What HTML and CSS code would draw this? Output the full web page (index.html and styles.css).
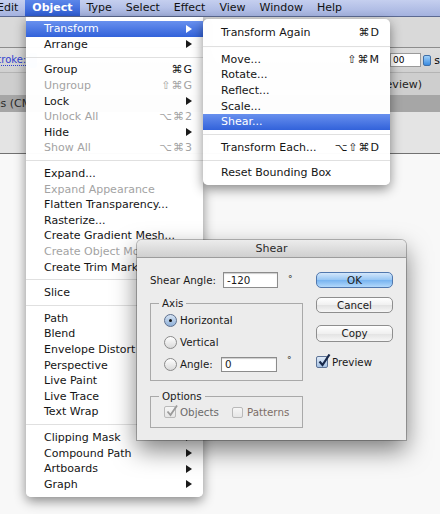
FILE: index.html
```html
<!DOCTYPE html>
<html lang="en">
<head>
    <meta charset="UTF-8">
    <title>Illustrator - Object menu</title>
    <link rel="stylesheet" href="styles.css">
</head>
<body>
<div class="screen">

    <!-- Menu bar -->
    <div class="menubar">
        <span class="mb-item first">Edit</span>
        <span class="mb-item active">Object</span>
        <span class="mb-item">Type</span>
        <span class="mb-item">Select</span>
        <span class="mb-item">Effect</span>
        <span class="mb-item">View</span>
        <span class="mb-item">Window</span>
        <span class="mb-item">Help</span>
    </div>

    <!-- Application chrome behind the menus -->
    <div class="toolbar"></div>
    <div class="controlbar">
        <span class="stroke-label">Stroke:</span>
        <span class="swatch"></span>
        <div class="control-right">
            <span class="mini-field">00</span>
            <span class="spin"></span>
            <span class="mini-text">s</span>
        </div>
    </div>
    <div class="tabbar">
        <div class="tab-clip"><span class="tab-title">(CMYK/Preview)</span></div>
    </div>
    <div class="tabstrip">
        <div class="doc-clip"><span class="doc-name">Shapes (CMYK/Preview)</span></div>
    </div>
    <div class="rulerbar"></div>
    <div class="canvas"></div>

    <!-- Object menu -->
    <div class="menu object-menu">
        <div class="item hot"><span>Transform</span><span class="arrow"></span></div>
        <div class="item"><span>Arrange</span><span class="arrow"></span></div>
        <div class="sep"></div>
        <div class="item"><span>Group</span><span class="key">⌘G</span></div>
        <div class="item disabled"><span>Ungroup</span><span class="key">⇧⌘G</span></div>
        <div class="item"><span>Lock</span><span class="arrow"></span></div>
        <div class="item disabled"><span>Unlock All</span><span class="key">⌥⌘2</span></div>
        <div class="item"><span>Hide</span><span class="arrow"></span></div>
        <div class="item disabled"><span>Show All</span><span class="key">⌥⌘3</span></div>
        <div class="sep"></div>
        <div class="item"><span>Expand...</span></div>
        <div class="item disabled"><span>Expand Appearance</span></div>
        <div class="item"><span>Flatten Transparency...</span></div>
        <div class="item"><span>Rasterize...</span></div>
        <div class="item"><span>Create Gradient Mesh...</span></div>
        <div class="item disabled"><span>Create Object Mosaic...</span></div>
        <div class="item"><span>Create Trim Marks</span></div>
        <div class="sep"></div>
        <div class="item"><span>Slice</span><span class="arrow"></span></div>
        <div class="sep"></div>
        <div class="item"><span>Path</span><span class="arrow"></span></div>
        <div class="item"><span>Blend</span><span class="arrow"></span></div>
        <div class="item"><span>Envelope Distort</span><span class="arrow"></span></div>
        <div class="item"><span>Perspective</span><span class="arrow"></span></div>
        <div class="item"><span>Live Paint</span><span class="arrow"></span></div>
        <div class="item"><span>Live Trace</span><span class="arrow"></span></div>
        <div class="item"><span>Text Wrap</span><span class="arrow"></span></div>
        <div class="sep"></div>
        <div class="item"><span>Clipping Mask</span><span class="arrow"></span></div>
        <div class="item"><span>Compound Path</span><span class="arrow"></span></div>
        <div class="item"><span>Artboards</span><span class="arrow"></span></div>
        <div class="item"><span>Graph</span><span class="arrow"></span></div>
    </div>

    <!-- Transform submenu -->
    <div class="menu submenu">
        <div class="item"><span>Transform Again</span><span class="key">⌘D</span></div>
        <div class="sep wide"></div>
        <div class="item"><span>Move...</span><span class="key">⇧⌘M</span></div>
        <div class="item"><span>Rotate...</span></div>
        <div class="item"><span>Reflect...</span></div>
        <div class="item"><span>Scale...</span></div>
        <div class="item hot"><span>Shear...</span></div>
        <div class="sep"></div>
        <div class="item"><span>Transform Each...</span><span class="key">⌥⇧⌘D</span></div>
        <div class="sep"></div>
        <div class="item"><span>Reset Bounding Box</span></div>
    </div>

    <!-- Shear dialog -->
    <div class="dialog">
        <div class="titlebar">Shear</div>
        <div class="dialog-body">
            <div class="dialog-left">
                <div class="field-row">
                    <span class="angle-label">Shear Angle:</span>
                    <span class="field">-120</span>
                    <span class="deg">°</span>
                </div>

                <fieldset class="group">
                    <legend>Axis</legend>
                    <div class="radio-row"><span class="radio on"></span>Horizontal</div>
                    <div class="radio-row"><span class="radio"></span>Vertical</div>
                    <div class="radio-row">
                        <span class="radio"></span><span class="axis-angle">Angle:</span>
                        <span class="field small">0</span>
                        <span class="deg">°</span>
                    </div>
                </fieldset>

                <fieldset class="group options">
                    <legend>Options</legend>
                    <div class="check-row">
                        <span class="check off">
                            <svg class="tick" viewBox="0 0 14 14"><path d="M2.5 7.5 L5.5 11 L12 1.5" fill="none" stroke="#9a9a9a" stroke-width="1.8"/></svg>
                        </span>
                        <span class="dim">Objects</span>
                        <span class="check off patterns"></span>
                        <span class="dim brown">Patterns</span>
                    </div>
                </fieldset>
            </div>

            <div class="dialog-right">
                <div class="btn default">OK</div>
                <div class="btn cancel">Cancel</div>
                <div class="btn copy">Copy</div>
                <div class="check-row preview">
                    <span class="check on">
                        <svg class="tick" viewBox="0 0 14 14"><path d="M2.5 7.5 L5.5 11 L12.5 0.5" fill="none" stroke="#17284a" stroke-width="2.2"/></svg>
                    </span>
                    Preview
                </div>
            </div>
        </div>
    </div>

</div>
</body>
</html>
```

FILE: styles.css
```css
* {
    box-sizing: border-box;
}

body {
    margin: 0;
    font-family: "DejaVu Sans", sans-serif;
    background-color: #f7f7f7;
}

.screen {
    position: relative;
    width: 440px;
    height: 514px;
    overflow: hidden;
}

/* ---------- menu bar ---------- */

.menubar {
    height: 17px;
    display: flex;
    background: linear-gradient(#c5cfef, #a4b2df);
    border-bottom: 1px solid #5c6a92;
    font-size: 11px;
    color: #111;
    white-space: nowrap;
}

.mb-item {
    padding: 0 7px;
    line-height: 16px;
}

.mb-item.first {
    margin-left: -10px;
}

.mb-item.active {
    background: linear-gradient(#5c87ea, #2f5dd5);
    color: white;
    font-weight: bold;
}

/* ---------- app chrome ---------- */

.toolbar {
    height: 31px;
    background-color: #d9d9d9;
    border-bottom: 1px solid #8d8d8d;
}

.controlbar {
    height: 25px;
    display: flex;
    align-items: center;
    background: linear-gradient(#dedede, #d0d0d0);
    border-bottom: 1px solid #b4b4b4;
    font-size: 10px;
}

.stroke-label {
    margin-left: -9px;
    color: #3142d0;
    border-bottom: 1px dotted #3142d0;
}

.swatch {
    width: 8px;
    height: 15px;
    margin-left: 3px;
    border-radius: 3px;
    background: linear-gradient(#8fc0f4, #3b82d8);
}

.control-right {
    margin-left: auto;
    width: 50px;
    display: flex;
    align-items: center;
    gap: 2px;
}

.mini-field {
    width: 33px;
    height: 14px;
    padding-left: 2px;
    background: white;
    border: 1px solid #9a9a9a;
    font-size: 9px;
    line-height: 12px;
}

.spin {
    width: 9px;
    height: 11px;
    border-radius: 2px;
    background: linear-gradient(#9fd0fa, #3a8be0);
    border: 1px solid #3e6fa8;
}

.mini-text {
    margin-left: 1px;
    font-size: 11px;
}

.tabbar {
    height: 22px;
    display: flex;
    justify-content: flex-end;
    align-items: center;
    background-color: #cecece;
    font-size: 11px;
    color: #222;
}

/* only the tail of the document title shows past the open menus */
.tab-clip {
    width: 50px;
    overflow: hidden;
    display: flex;
    justify-content: flex-end;
}

.tab-title {
    flex-shrink: 0;
    margin-right: 18px;
    white-space: nowrap;
}

.tabstrip {
    height: 17px;
    display: flex;
    align-items: center;
    background-color: #a6a6a6;
    font-size: 11px;
    color: #2a2a2a;
    white-space: nowrap;
}

.doc-clip {
    width: 26px;
    overflow: hidden;
}

.doc-name {
    display: inline-block;
    margin-left: -34px;
}

.rulerbar {
    height: 42px;
    background-color: #e4e4e4;
    border-bottom: 1px solid #717171;
}

.canvas {
    height: 400px;
    background-color: #f8f8f8;
}

/* ---------- pull-down menus ---------- */

.menu {
    position: absolute;
    background-color: rgba(255, 255, 255, 0.98);
    font-size: 11px;
    color: #151515;
    white-space: nowrap;
    box-shadow: 0 4px 12px rgba(0, 0, 0, 0.45);
}

.object-menu {
    left: 26px;
    top: 17px;
    width: 177px;
    padding: 4px 0 5px;
    border-radius: 0 0 5px 5px;
    z-index: 1;
}

.submenu {
    left: 203px;
    top: 19px;
    width: 187px;
    padding: 6px 0 4px;
    border-radius: 5px;
    z-index: 2;
}

.item {
    height: 15.6px;
    display: flex;
    align-items: center;
    justify-content: space-between;
    padding: 0 10px 0 18px;
}

.item.disabled {
    color: #a3a3a3;
}

.item.hot {
    background: linear-gradient(#6890ee, #3262da);
    color: white;
}

.key {
    letter-spacing: 1px;
}

.arrow {
    width: 0;
    height: 0;
    margin-right: 1px;
    border-left: 6px solid #1a1a1a;
    border-top: 4px solid transparent;
    border-bottom: 4px solid transparent;
}

.item.hot .arrow {
    border-left-color: white;
}

.sep {
    height: 10px;
    display: flex;
    align-items: center;
}

.sep.wide {
    height: 11px;
}

.sep::before {
    content: "";
    flex: 1;
    height: 1px;
    background-color: #e0e0e0;
}

/* ---------- shear dialog ---------- */

.dialog {
    position: absolute;
    left: 137px;
    top: 240px;
    width: 269px;
    height: 200px;
    background-color: #ececec;
    border-radius: 5px 5px 0 0;
    box-shadow: 0 0 0 1px rgba(0, 0, 0, 0.25), 0 10px 24px rgba(0, 0, 0, 0.5);
    z-index: 3;
    font-size: 10.3px;
    color: #1a1a1a;
}

.titlebar {
    height: 18px;
    background: linear-gradient(#ececec, #cfcfcf);
    border-bottom: 1px solid #9c9c9c;
    border-radius: 5px 5px 0 0;
    text-align: center;
    font-size: 11px;
    line-height: 18px;
    color: #2a2a2a;
}

.dialog-body {
    display: flex;
    gap: 13px;
    padding: 14px 13px 0;
}

.dialog-left {
    width: 153px;
}

.field-row {
    display: flex;
    align-items: center;
    height: 16px;
}

.angle-label {
    width: 73px;
}

.field {
    width: 55px;
    height: 16px;
    padding-left: 3px;
    background-color: white;
    border: 1px solid #8c8c8c;
    box-shadow: inset 0 1px 1px rgba(0, 0, 0, 0.2);
    line-height: 14px;
}

.field.small {
    width: 56px;
    height: 15px;
    line-height: 13px;
}

.deg {
    margin-left: 10px;
    font-size: 9px;
    align-self: flex-start;
    padding-top: 2px;
}

.group {
    margin: 9px 0 0;
    padding: 0 0 5px 13px;
    border: 1px solid #a9a9a9;
    min-inline-size: 0;
}

.group legend {
    margin-left: -5px;
    padding: 0 3px;
    line-height: 12px;
}

.radio-row {
    display: flex;
    align-items: center;
    height: 22px;
}

.radio {
    position: relative;
    width: 13px;
    height: 13px;
    margin-right: 3px;
    border-radius: 50%;
    border: 1px solid #8a8a8a;
    background: linear-gradient(#ffffff, #d9d9d9);
}

.radio.on {
    border-color: #5c6f8e;
    background: linear-gradient(#d5e3f3, #8fb0d8);
}

.radio.on::after {
    content: "";
    position: absolute;
    left: 4px;
    top: 4px;
    width: 3px;
    height: 3px;
    border-radius: 50%;
    background-color: #111;
}

.axis-angle {
    width: 41px;
}

.options .check-row {
    height: 20px;
}

.check-row {
    display: flex;
    align-items: center;
}

.check {
    position: relative;
    width: 12px;
    height: 12px;
    margin-right: 4px;
    border: 1px solid #9c9c9c;
    border-radius: 2px;
    background: linear-gradient(#ffffff, #e0e0e0);
}

.check.off {
    background: linear-gradient(#f6f6f6, #e6e6e6);
    border-color: #b9b9b9;
}

.check.patterns {
    margin-left: 13px;
    width: 11px;
    height: 11px;
}

.check.on {
    border-color: #5d7396;
    background: linear-gradient(#dfeaf7, #a6c2e4);
}

.tick {
    position: absolute;
    left: 0;
    top: -3px;
    width: 14px;
    height: 14px;
}

.dim {
    color: #6b6b6b;
}

.dim.brown {
    color: #7d6e67;
}

.dialog-right {
    width: 77px;
    display: flex;
    flex-direction: column;
}

.btn {
    height: 16px;
    border: 1px solid #8e8e8e;
    border-radius: 5px;
    background: linear-gradient(#ffffff, #f0f0f0 50%, #e2e2e2 51%, #f6f6f6);
    text-align: center;
    line-height: 14px;
}

.btn.default {
    border-color: #5178ae;
    background: linear-gradient(#d3e7fb, #97c6f4 50%, #76b3f0 51%, #b2d8fb);
}

.btn.cancel {
    margin-top: 9px;
}

.btn.copy {
    margin-top: 12px;
    height: 17px;
    line-height: 15px;
}

.check-row.preview {
    margin-top: 13px;
    height: 14px;
}
```
